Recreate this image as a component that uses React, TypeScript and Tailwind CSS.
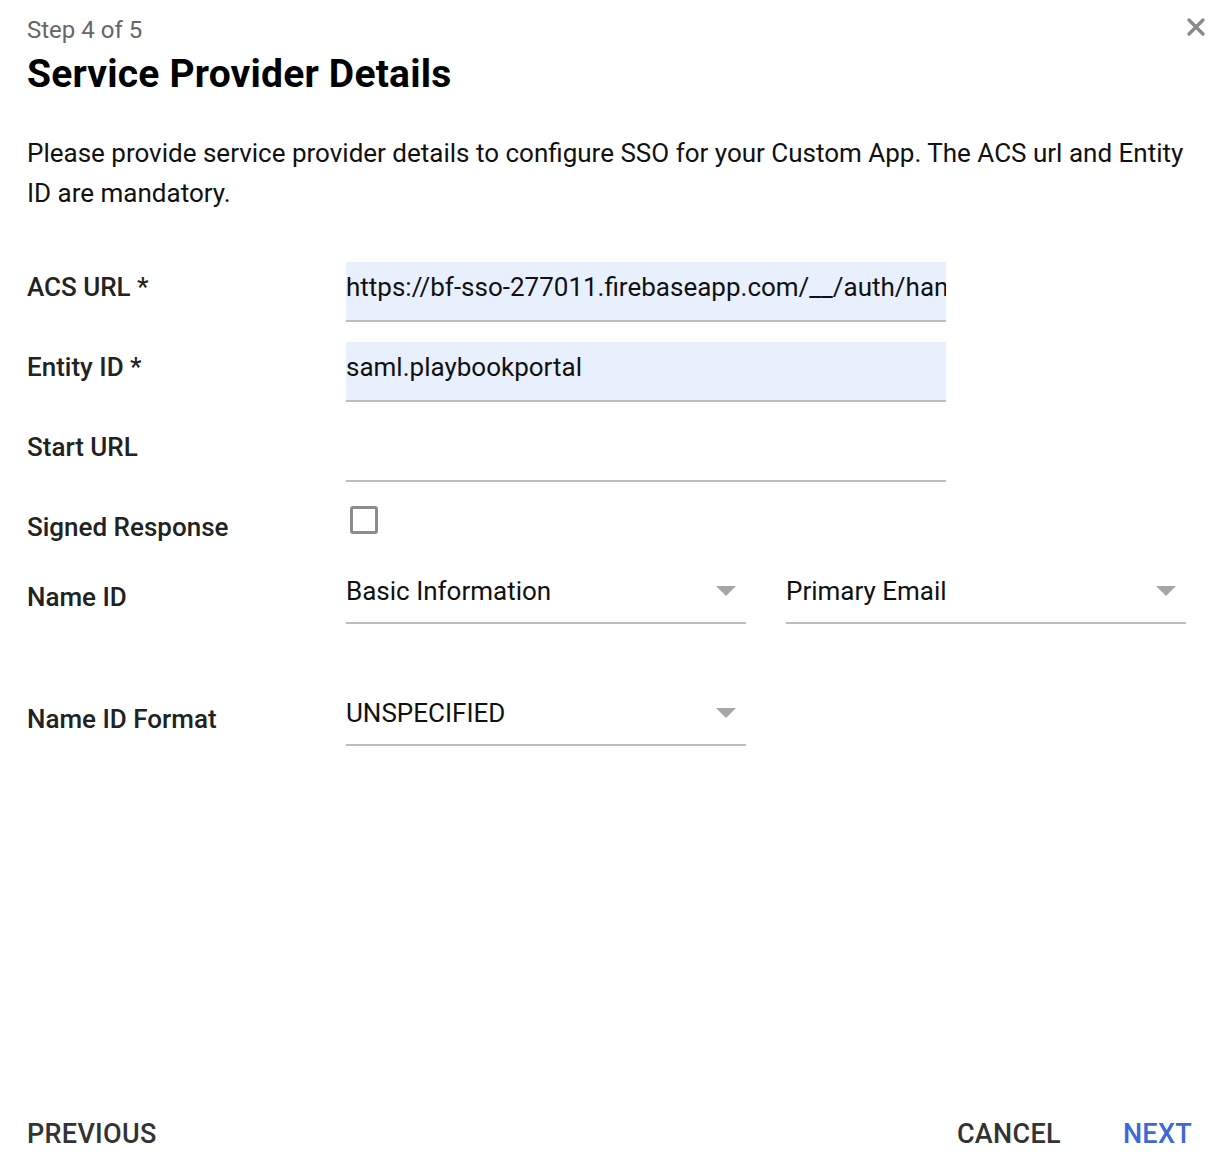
import React, { useState } from 'react';

const font = { fontFamily: 'Roboto, "Liberation Sans", Arial, sans-serif' };

function Caret() {
  return (
    <svg width="20" height="10" viewBox="0 0 20 10" className="shrink-0">
      <path d="M0 0 L20 0 L10 10 Z" fill="#a6a6a6" />
    </svg>
  );
}

function TextField({ value, filled }: { value: string; filled?: boolean }) {
  return (
    <div
      className={`w-[600px] h-[60px] border-b-2 border-[#bdbdbd] pt-[11px] ${filled ? 'bg-[#e8f0fe]' : ''}`}
    >
      <div className="text-[26px] leading-[28px] text-[#111] whitespace-nowrap overflow-hidden">{value}</div>
    </div>
  );
}

function Select({ value }: { value: string }) {
  return (
    <div className="w-[400px] border-b-2 border-[#bdbdbd] pb-[19px] flex items-center justify-between pr-[10px]">
      <span className="text-[26px] leading-[24px] text-[#111]">{value}</span>
      <Caret />
    </div>
  );
}

function Label({ children, className = '' }: { children: React.ReactNode; className?: string }) {
  return (
    <div className={`w-[319px] shrink-0 text-[26px] leading-[28px] font-medium text-[#222] ${className}`}>
      {children}
    </div>
  );
}

export default function App() {
  const [signed, setSigned] = useState(false);

  return (
    <div style={font} className="h-screen w-full bg-white flex flex-col pl-[27px] pr-[34px] text-[#111]">
      <div className="flex justify-between items-start pt-[16px]">
        <div className="text-[24px] leading-[28px] text-[#666]">Step 4 of 5</div>
        <button className="mr-[-14px] mt-[1px] w-[20px] h-[20px] flex items-center justify-center">
          <svg width="20" height="20" viewBox="0 0 20 20">
            <path d="M3 3 L17 17 M17 3 L3 17" stroke="#8a8a8a" strokeWidth="3.5" strokeLinecap="round" />
          </svg>
        </button>
      </div>
      <h1 className="mt-[8px] text-[39px] leading-[44px] font-bold tracking-[0.2px] text-black">
        Service Provider Details
      </h1>
      <p className="mt-[37px] text-[26px] leading-[40px] text-[#111]">
        Please provide service provider details to configure SSO for your Custom App. The ACS url and Entity ID are
        mandatory.
      </p>

      <div className="mt-[49px] flex flex-col">
        <div className="flex items-start">
          <Label className="mt-[11px]">ACS URL *</Label>
          <TextField value="https://bf-sso-277011.firebaseapp.com/__/auth/handler" filled />
        </div>
        <div className="flex items-start mt-[20px]">
          <Label className="mt-[11px]">Entity ID *</Label>
          <TextField value="saml.playbookportal" filled />
        </div>
        <div className="flex items-start mt-[20px]">
          <Label className="mt-[11px]">Start URL</Label>
          <TextField value="" />
        </div>
        <div className="flex items-start mt-[20px] h-[57px]">
          <Label className="mt-[11px]">Signed Response</Label>
          <button
            onClick={() => setSigned(!signed)}
            className="mt-[4px] ml-[4px] w-[28px] h-[28px] rounded-[3px] border-[3px] border-[#8c8c8c]"
          />
        </div>
        <div className="flex items-start mt-[20px]">
          <Label className="mt-[4px]">Name ID</Label>
          <Select value="Basic Information" />
          <div className="ml-[40px]">
            <Select value="Primary Email" />
          </div>
        </div>
        <div className="flex items-start mt-[77px]">
          <Label className="mt-[4px]">Name ID Format</Label>
          <Select value="UNSPECIFIED" />
        </div>
      </div>

      <div className="mt-auto pb-[25px] flex items-center">
        <button className="text-[27px] leading-[30px] font-medium tracking-[0.3px] text-[#333]">PREVIOUS</button>
        <div className="flex-1" />
        <button className="text-[27px] leading-[30px] font-medium tracking-[0.3px] text-[#333]">CANCEL</button>
        <button className="ml-[62px] text-[27px] leading-[30px] font-medium tracking-[0.3px] text-[#3f67d8]">NEXT</button>
      </div>
    </div>
  );
}
